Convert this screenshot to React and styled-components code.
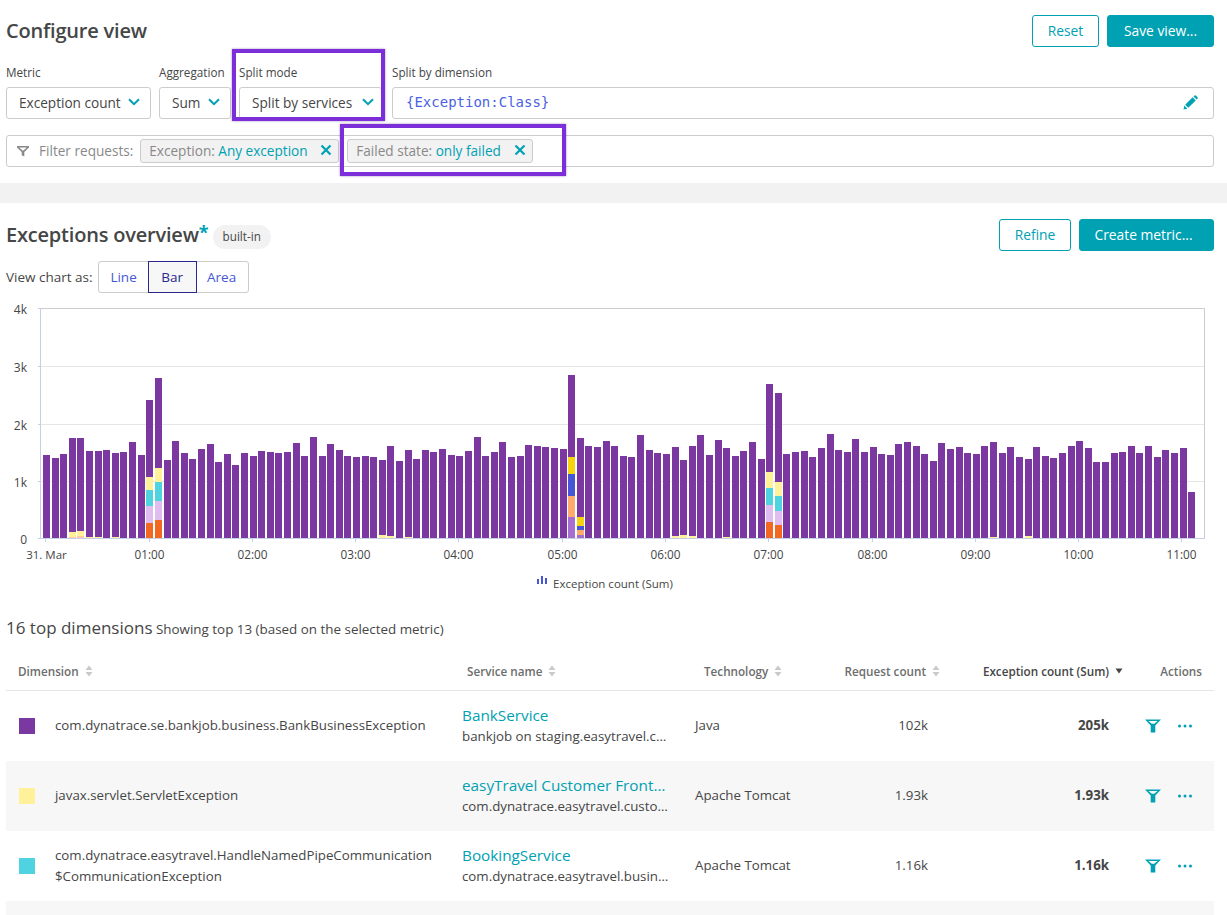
import React from "react";
import styled, { createGlobalStyle } from "styled-components";

const Global = createGlobalStyle`
  html, body { margin: 0; padding: 0; background: #fff; }
  body { font-family: "Open Sans", "Noto Sans", sans-serif; color: #454646; font-size: 14px; overflow: hidden; }
  * { box-sizing: border-box; }
`;

const TEAL = "#00a1b2";

const Page = styled.div`
  position: relative;
  width: 1227px;
  height: 915px;
  overflow: hidden;
`;
const Section = styled.section`
  padding: ${(p) => p.$pad};
`;
const HeadRow = styled.div`
  display: flex;
  align-items: center;
  justify-content: space-between;
  height: 32px;
`;
const Title = styled.h1`
  margin: 0;
  font-size: 20px;
  font-weight: 600;
  line-height: 28px;
  color: #454646;
  letter-spacing: -0.2px;
  padding-bottom: 1px;
`;
const Buttons = styled.div`
  display: flex;
  gap: 8px;
`;
const Btn = styled.button`
  height: 32px;
  width: ${(p) => p.$w}px;
  padding: 0 ${(p) => p.$pr || 0}px 2px 0;
  border-radius: 3px;
  font: 500 13.8px "Open Sans", sans-serif;
  border: 1px solid ${TEAL};
  background: ${(p) => (p.$primary ? TEAL : "#fff")};
  color: ${(p) => (p.$primary ? "#fff" : TEAL)};
`;
const FieldRow = styled.div`
  display: flex;
  margin-top: 18px;
`;
const Field = styled.div`
  display: flex;
  flex-direction: column;
  width: ${(p) => (p.$w ? p.$w + "px" : "auto")};
  flex: ${(p) => (p.$w ? "none" : "1")};
  margin-right: ${(p) => p.$mr || 0}px;
`;
const Label = styled.label`
  font-size: 11.7px;
  line-height: 14px;
  height: 22px;
  color: #454646;
`;
const Select = styled.div`
  height: 32px;
  border: 1px solid #ccc;
  border-radius: 3px;
  display: flex;
  align-items: center;
  justify-content: space-between;
  padding: 0 ${(p) => p.$pr || 10}px 2px 12px;
  font-size: 13.6px;
  white-space: nowrap;
`;
const Mono = styled.span`
  font-family: "DejaVu Sans Mono", monospace;
  font-size: 14px;
  color: #4b62e3;
  margin-left: 1px;
`;
const FilterBar = styled.div`
  margin-top: 16px;
  height: 32px;
  border: 1px solid #ccc;
  border-radius: 3px;
  display: flex;
  align-items: center;
  padding-left: 10px;
  font-size: 13.6px;
  color: #898989;
`;
const FilterLabel = styled.span`
  margin: 0 7px 0 10px;
  padding-bottom: 2px;
  white-space: nowrap;
`;
const Chip = styled.span`
  height: 24px;
  width: ${(p) => p.$w}px;
  margin-right: 8px;
  display: flex;
  align-items: center;
  justify-content: space-between;
  background: #f2f2f2;
  border: 1px solid #ccc;
  border-radius: 3px;
  padding: 0 6px 2px 8px;
  white-space: nowrap;
  color: #898989;
`;
const ChipValue = styled.span`
  color: ${TEAL};
`;
const Band = styled.div`
  height: 20px;
  margin-top: 16px;
  background: #f2f2f2;
`;
const Callout = styled.div`
  position: absolute;
  left: ${(p) => p.$x}px;
  top: ${(p) => p.$y}px;
  width: ${(p) => p.$w}px;
  height: ${(p) => p.$h}px;
  border: 4px solid #7c2ed8;
  box-shadow: 0 0 2px rgba(60, 20, 120, 0.5);
`;
const TitleWrap = styled.div`
  display: flex;
  align-items: center;
`;
const Star = styled.span`
  color: ${TEAL};
  font-size: 18px;
  font-weight: 700;
  line-height: 28px;
  position: relative;
  top: -3px;
`;
const Badge = styled.span`
  margin-left: 4px;
  margin-top: 4px;
  height: 24px;
  padding: 0 10px;
  line-height: 23px;
  border-radius: 12px;
  background: #f2f2f2;
  font-size: 11.7px;
`;
const ViewRow = styled.div`
  display: flex;
  align-items: center;
  margin-top: 10px;
  height: 32px;
  font-size: 13.5px;
`;
const Segments = styled.div`
  display: flex;
  margin-left: 5px;
  height: 32px;
  border: 1px solid #ccc;
  border-radius: 3px;
`;
const Segment = styled.span`
  width: ${(p) => p.$w}px;
  display: flex;
  align-items: center;
  justify-content: center;
  font-size: 13.5px;
  color: ${(p) => (p.$active ? "#2a2a8c" : "#4556d7")};
  background: ${(p) => (p.$active ? "#f7f7f7" : "transparent")};
  outline: ${(p) => (p.$active ? "1px solid #2a2a8c" : "none")};
  ${(p) => (p.$active ? "z-index: 1;" : "")}
`;
const ChartSvg = styled.svg`
  display: block;
  margin-top: 6px;
  width: 1227px;
  height: 304px;
`;
const SubHead = styled.div`
  margin: 0 0 0 6px;
  padding-top: 11px;
  height: 43px;
  font-size: 13.4px;
  line-height: 28px;
`;
const SubTitle = styled.span`
  font-size: 17px;
  font-weight: 400;
`;
const Table = styled.div`
  margin: 9px 13px 0 6px;
`;
const COLS = "444px 233px 132px 125px 185px 89px";
const HeaderRow = styled.div`
  display: grid;
  grid-template-columns: ${COLS};
  height: 36px;
  padding-bottom: 3px;
  align-items: center;
  border-bottom: 1px solid #e6e6e6;
  font-size: 11.7px;
  font-weight: 600;
  color: #6d6d6d;
`;
const HeadCell = styled.div`
  display: flex;
  align-items: center;
  justify-content: ${(p) => (p.$right ? "flex-end" : "flex-start")};
  gap: 6px;
  padding-left: ${(p) => p.$pl || 0}px;
  padding-right: ${(p) => p.$pr || 0}px;
  color: ${(p) => (p.$strong ? "#454646" : "#6d6d6d")};
  white-space: nowrap;
`;
const Row = styled.div`
  display: grid;
  grid-template-columns: ${COLS};
  height: 70px;
  padding-bottom: 1px;
  align-items: center;
  background: ${(p) => (p.$alt ? "#f7f7f7" : "#fff")};
  font-size: 13.3px;
  line-height: 21px;
`;
const DimCell = styled.div`
  display: flex;
  align-items: center;
  gap: 20px;
  padding-left: 13px;
`;
const Swatch = styled.span`
  flex: none;
  width: 16px;
  height: 16px;
  background: ${(p) => p.$c};
`;
const ServiceCell = styled.div`
  padding-left: 12px;
  min-width: 0;
`;
const ServiceLink = styled.div`
  color: ${TEAL};
  font-size: 15.3px;
  line-height: 21px;
  white-space: nowrap;
  overflow: hidden;
  text-overflow: ellipsis;
  width: 205px;
`;
const ServiceSub = styled.div`
  white-space: nowrap;
  overflow: hidden;
  text-overflow: ellipsis;
  width: 209px;
  line-height: 21px;
`;
const TechCell = styled.div`
  padding-left: 12px;
`;
const NumCell = styled.div`
  text-align: right;
  padding-right: ${(p) => p.$pr}px;
  font-weight: ${(p) => (p.$bold ? 700 : 400)};
`;
const ActionCell = styled.div`
  display: flex;
  align-items: center;
  padding-left: 20px;
  gap: 16px;
`;

const Chevron = () => (
  <svg width="12" height="8" viewBox="0 0 12 8" fill="none">
    <path d="M1 1.2 6 6.2 11 1.2" stroke={TEAL} strokeWidth="2" />
  </svg>
);
const Cross = () => (
  <svg width="12" height="12" viewBox="0 0 12 12" fill="none">
    <path d="M1.5 1.5 10.5 10.5M10.5 1.5 1.5 10.5" stroke={TEAL} strokeWidth="2.2" />
  </svg>
);
const Pencil = () => (
  <svg width="15" height="15" viewBox="0 0 15 15" fill={TEAL}>
    <path d="M0.5 14.5 1.3 10.6 4.4 13.7ZM2.2 9.7 9.6 2.3 12.7 5.4 5.3 12.8ZM10.5 1.4 11.6 0.4Q12.2 0 12.8 0.4L14.6 2.2Q15 2.8 14.6 3.4L13.6 4.5Z" />
  </svg>
);
const Funnel = () => (
  <svg width="12" height="12" viewBox="0 0 12 12" fill="#898989">
    <path d="M0 1H12V2.6L7.3 7V11.5L4.7 10.2V7L0 2.6ZM2.2 2.4 5.6 5.6H6.4L9.8 2.4Z" />
  </svg>
);
const ActionFunnel = () => (
  <svg width="16" height="14" viewBox="0 0 16 14" fill={TEAL}>
    <path d="M0 0.5H16L10.3 6.4V13.5H5.7V6.4ZM3.4 2.1 6.8 4.8H9.2L12.6 2.1Z" fillRule="evenodd" />
  </svg>
);
const Dots = () => (
  <svg width="16" height="4" viewBox="0 0 16 4" fill={TEAL}>
    <circle cx="2.5" cy="2" r="1.5" />
    <circle cx="8" cy="2" r="1.5" />
    <circle cx="13.5" cy="2" r="1.5" />
  </svg>
);
const Sort = ({ dark }) =>
  dark ? (
    <svg width="8" height="6" viewBox="0 0 8 6" fill="#454646">
      <path d="M0.5 0.5H7.5L4 5.5Z" />
    </svg>
  ) : (
    <svg width="8" height="12" viewBox="0 0 8 12" fill="#c9c9c9">
      <path d="M4 0.5 7.5 5H0.5ZM0.5 7H7.5L4 11.5Z" />
    </svg>
  );

const tops = [
  465,474,462,414,414,453,453,450,459,456,426,465,300,234,480,423,459,477,447,432,486,462,495,459,468,453,456,459,456,429,468,411,468,432,450,468,471,468,471,480,438,483,
  450,477,450,456,447,465,468,453,411,468,456,426,471,468,435,438,441,444,447,225,414,438,441,423,438,468,471,405,450,459,462,441,480,438,405,465,420,444,468,453,426,477,252,279,462,456,453,471,444,
  402,450,456,417,456,441,462,465,432,426,438,462,483,429,447,441,459,462,438,426,459,441,471,477,441,468,474,459,438,423,444,486,486,459,456,438,459,438,471,450,459,444,576,
];
const Y = "#fff09a", C = "#4fd3e0", L = "#e0bdf0", O = "#f26722", P = "#ffab6e", B = "#4556d7", G = "#f5d30f", V = "#a56fcf", PE = "#ffc9a8";
const stacks = {
  3: [[711, PE], [696, Y]],
  4: [[708, PE], [693, Y]],
  5: [[711, Y]],
  6: [[711, Y]],
  8: [[711, Y]],
  12: [[669, O], [618, L], [570, C], [531, Y]],
  13: [[660, O], [603, L], [546, C], [504, Y]],
  39: [[705, Y]],
  40: [[708, Y]],
  42: [[711, Y]],
  61: [[651, V], [588, P], [522, B], [471, G]],
  62: [[705, V], [690, P], [678, B], [651, G]],
  73: [[708, Y]],
  74: [[705, Y]],
  75: [[708, Y]],
  79: [[711, Y]],
  84: [[666, O], [615, L], [564, C], [516, Y]],
  85: [[675, O], [633, L], [588, C], [546, Y]],
  110: [[711, Y]],
  114: [[708, Y]],
};
const CHART_TOP = 299;
const yOf = (z) => Math.round(300 + z / 3) - CHART_TOP;
const BASE = yOf(714);

const hours = [
  ["31. Mar", 45.5], ["01:00", 149.5], ["02:00", 252.5], ["03:00", 355.5], ["04:00", 458.5], ["05:00", 562.5],
  ["06:00", 665.5], ["07:00", 768.5], ["08:00", 872.5], ["09:00", 975.5], ["10:00", 1078.5], ["11:00", 1181.5],
];
const yTicks = [["4k", 9.5], ["3k", 67.5], ["2k", 125.5], ["1k", 182.5], ["0", 239.5]];

const Chart = () => (
  <ChartSvg viewBox="0 0 1227 304">
    {yTicks.slice(1, 4).map(([t, y]) => (
      <line key={t} x1="41" x2="1205" y1={y} y2={y} stroke="#e6e6e6" />
    ))}
    <path d="M41 9.5H1204.5V239.5" fill="none" stroke="#ccc" />
    <path d="M40.5 9V240" stroke="#c5d0e8" />
    {yTicks.map(([t, y]) => (
      <line key={t} x1="38" x2="41" y1={y} y2={y} stroke="#c5d0e8" />
    ))}
    {tops.map((z, i) => {
      const x = Math.round(43 + i * 8.61);
      const segs = stacks[i] || [];
      const purpleBottom = segs.length ? yOf(segs[segs.length - 1][0]) : BASE;
      let prev = BASE;
      return (
        <g key={i}>
          <rect x={x} width="7" y={yOf(z)} height={purpleBottom - yOf(z)} fill="#7c38a1" />
          {segs.map(([t, c]) => {
            const yy = yOf(t);
            const h = prev - yy;
            prev = yy;
            return <rect key={t} x={x} width="7" y={yy} height={h} fill={c} />;
          })}
        </g>
      );
    })}
    <line x1="41" x2="1205" y1="239.5" y2="239.5" stroke="#c5d0e8" />
    {hours.map(([t, x]) => (
      <g key={t}>
        <line x1={x} x2={x} y1="240" y2="243" stroke="#c5d0e8" />
        <text x={t.startsWith("31") ? x + 1 : x} y="259.5" textAnchor="middle" fontSize={t.startsWith("31") ? 11.5 : 11.8} fill="#454646" fontFamily="Open Sans, sans-serif">
          {t}
        </text>
      </g>
    ))}
    {yTicks.map(([t, y]) => (
      <text key={t} x="27" y={y + 5.5} textAnchor="end" fontSize="12" fill="#454646" fontFamily="Open Sans, sans-serif">
        {t}
      </text>
    ))}
    <g fill="#4556d7">
      <rect x="537" y="280" width="2" height="5" />
      <rect x="541" y="277" width="2" height="8" />
      <rect x="545" y="279" width="2" height="6" />
    </g>
    <text x="553" y="289" fontSize="11.5" fill="#454646" fontFamily="Open Sans, sans-serif">
      Exception count (Sum)
    </text>
  </ChartSvg>
);

const rows = [
  { c: "#7c38a1", dim: ["com.dynatrace.se.bankjob.business.BankBusinessException"], link: "BankService", sub: "bankjob on staging.easytravel.com", tech: "Java", req: "102k", exc: "205k" },
  { c: "#fff09a", dim: ["javax.servlet.ServletException"], link: "easyTravel Customer Frontend", sub: "com.dynatrace.easytravel.customer.frontend", tech: "Apache Tomcat", req: "1.93k", exc: "1.93k", alt: true },
  { c: "#4fd3e0", dim: ["com.dynatrace.easytravel.HandleNamedPipeCommunication", "$CommunicationException"], link: "BookingService", sub: "com.dynatrace.easytravel.business.backend", tech: "Apache Tomcat", req: "1.16k", exc: "1.16k" },
];

export default function App() {
  return (
    <Page>
      <Global />
      <Section $pad="15px 13px 0 6px">
        <HeadRow>
          <Title>Configure view</Title>
          <Buttons>
            <Btn $w={67}>Reset</Btn>
            <Btn $w={107} $primary>Save view...</Btn>
          </Buttons>
        </HeadRow>
        <FieldRow>
          <Field $w={145} $mr={8}>
            <Label>Metric</Label>
            <Select>Exception count <Chevron /></Select>
          </Field>
          <Field $w={72} $mr={8}>
            <Label>Aggregation</Label>
            <Select>Sum <Chevron /></Select>
          </Field>
          <Field $w={143} $mr={10}>
            <Label>Split mode</Label>
            <Select $pr={7}>Split by services <Chevron /></Select>
          </Field>
          <Field>
            <Label>Split by dimension</Label>
            <Select $pr={15}><Mono>{"{Exception:Class}"}</Mono> <Pencil /></Select>
          </Field>
        </FieldRow>
        <FilterBar>
          <Funnel />
          <FilterLabel>Filter requests:</FilterLabel>
          <Chip $w={199}>
            <span>Exception: <ChipValue>Any exception</ChipValue></span>
            <Cross />
          </Chip>
          <Chip $w={186}>
            <span>Failed state: <ChipValue>only failed</ChipValue></span>
            <Cross />
          </Chip>
        </FilterBar>
      </Section>
      <Band />
      <Section $pad="16px 13px 0 6px">
        <HeadRow>
          <TitleWrap>
            <Title>Exceptions overview</Title>
            <Star>*</Star>
            <Badge>built-in</Badge>
          </TitleWrap>
          <Buttons>
            <Btn $w={72}>Refine</Btn>
            <Btn $w={135} $primary $pr={6}>Create metric...</Btn>
          </Buttons>
        </HeadRow>
        <ViewRow>
          View chart as:
          <Segments>
            <Segment $w={50}>Line</Segment>
            <Segment $w={47} $active>Bar</Segment>
            <Segment $w={52}>Area</Segment>
          </Segments>
        </ViewRow>
      </Section>
      <Chart />
      <SubHead>
        <SubTitle>16 top dimensions</SubTitle> Showing top 13 (based on the selected metric)
      </SubHead>
      <Table>
        <HeaderRow>
          <HeadCell $pl={12}>Dimension <Sort /></HeadCell>
          <HeadCell $pl={17}>Service name <Sort /></HeadCell>
          <HeadCell $pl={21}>Technology <Sort /></HeadCell>
          <HeadCell $right>Request count <Sort /></HeadCell>
          <HeadCell $right $pr={2} $strong>Exception count (Sum) <Sort dark /></HeadCell>
          <HeadCell $right $pr={12}>Actions</HeadCell>
        </HeaderRow>
        {rows.map((r) => (
          <Row key={r.link} $alt={r.alt}>
            <DimCell>
              <Swatch $c={r.c} />
              <div>{r.dim.map((d) => <div key={d}>{d}</div>)}</div>
            </DimCell>
            <ServiceCell>
              <ServiceLink>{r.link}</ServiceLink>
              <ServiceSub>{r.sub}</ServiceSub>
            </ServiceCell>
            <TechCell>{r.tech}</TechCell>
            <NumCell $pr={12}>{r.req}</NumCell>
            <NumCell $pr={16} $bold>{r.exc}</NumCell>
            <ActionCell><ActionFunnel /><Dots /></ActionCell>
          </Row>
        ))}
        <Row $alt />
      </Table>
      <Callout $x={232} $y={49} $w={153} $h={72} />
      <Callout $x={340} $y={124} $w={226} $h={52} />
    </Page>
  );
}
